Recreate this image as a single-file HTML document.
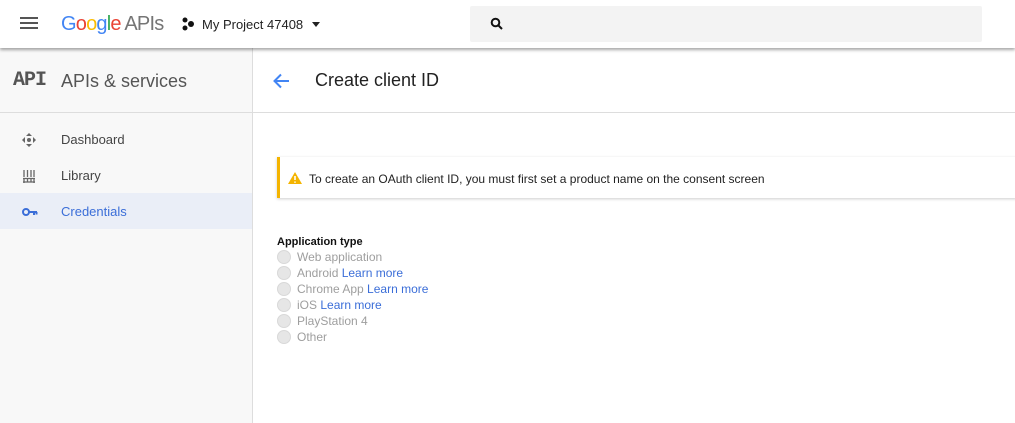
<!DOCTYPE html>
<html><head><style>
*{margin:0;padding:0;box-sizing:border-box}
body{width:1015px;height:423px;overflow:hidden;font-family:"Liberation Sans",Roboto,sans-serif;background:#fff;position:relative}
.hdr{position:absolute;left:0;top:0;width:1015px;height:48px;background:#fff;box-shadow:0 2px 3px rgba(0,0,0,.35);z-index:2}
.side{position:absolute;left:0;top:48px;width:253px;height:375px;background:#f8f8f8;border-right:1px solid #ddd}
.abs{position:absolute}
.item{position:absolute;left:0;width:252px;height:36px;font-size:13px;color:#444;line-height:38px}
.item span{position:absolute;left:61px}
.radio{position:absolute;left:277px;width:14px;height:14px;border-radius:50%;background:#e6e6e6;border:1px solid #d8d8d8}
.rl{position:absolute;left:297px;font-size:12px;color:#9e9e9e;line-height:16px}
.rl a{color:#3b6ed8;text-decoration:none}
</style></head><body>
<div class="hdr">
 <div class="abs" style="left:20px;top:17px;width:18px;height:2px;background:#555;box-shadow:0 5px 0 #555,0 10px 0 #555"></div>
 <div class="abs" style="left:61px;top:11px;font-size:20px;line-height:26px;letter-spacing:-0.8px"><span style="color:#4285f4">G</span><span style="color:#ea4335">o</span><span style="color:#fbbc05">o</span><span style="color:#4285f4">g</span><span style="color:#34a853">l</span><span style="color:#ea4335">e</span> <span style="color:#757575">APIs</span></div>
 <svg class="abs" style="left:181px;top:17px" width="14" height="14"><circle cx="4" cy="3" r="2.5" fill="#111"/><circle cx="10" cy="7" r="3" fill="#111"/><circle cx="4" cy="11" r="2.5" fill="#111"/></svg>
 <div class="abs" style="left:202px;top:17px;font-size:13px;color:#222">My Project 47408</div>
 <div class="abs" style="left:312px;top:22px;border-left:4px solid transparent;border-right:4px solid transparent;border-top:5px solid #222"></div>
 <div class="abs" style="left:470px;top:6px;width:512px;height:36px;background:#f3f3f3;border-radius:2px"></div>
 <svg class="abs" style="left:490px;top:17px" width="14" height="14"><circle cx="5.5" cy="5.5" r="3.8" fill="none" stroke="#111" stroke-width="2"/><path d="M8.5 8.5L12 12" stroke="#111" stroke-width="2"/></svg>
</div>
<div class="side">
 <div class="abs" style="left:13px;top:21px;font-family:'Liberation Mono',monospace;font-weight:bold;font-size:20px;color:#555;letter-spacing:-1px">API</div>
 <div class="abs" style="left:61px;top:23px;font-size:18px;color:#555">APIs &amp; services</div>
 <div class="abs" style="left:0;top:64px;width:252px;height:1px;background:#ddd"></div>
 <div class="item" style="top:73px"><svg class="abs" style="left:22px;top:12px" width="14" height="14"><path d="M7 0L10 3H4zM7 14L4 11H10zM0 7L3 4V10zM14 7L11 10V4z" fill="#666"/><circle cx="7" cy="7" r="2" fill="#666"/></svg><span>Dashboard</span></div>
 <div class="item" style="top:109px"><svg class="abs" style="left:23px;top:12px" width="12" height="14"><path d="M1 1v7M4.5 1v7M8 1v7M11 1v7M0 9.5h12M0 13h12M1 9v5M4.5 9.5v4M8 9.5v4M11 9v5" stroke="#666" stroke-width="1.3"/></svg><span>Library</span></div>
 <div class="item" style="top:145px;background:#eaeef7;color:#3b6ed8"><svg class="abs" style="left:22px;top:14px" width="16" height="10"><circle cx="4" cy="5" r="3" fill="none" stroke="#3b6ed8" stroke-width="2"/><path d="M7 5h8M12 5v3M14.5 5v2.5" stroke="#3b6ed8" stroke-width="2"/></svg><span>Credentials</span></div>
</div>
<svg class="abs" style="left:272px;top:73px" width="18" height="16"><path d="M17 8H3M9 1.5L2.5 8 9 14.5" fill="none" stroke="#4285f4" stroke-width="2"/></svg>
<div class="abs" style="left:315px;top:70px;font-size:18px;color:#222">Create client ID</div>
<div class="abs" style="left:253px;top:112px;width:762px;height:1px;background:#ddd"></div>
<div class="abs" style="left:277px;top:157px;width:740px;height:41px;background:#fff;border-left:3px solid #f4b400;box-shadow:0 1px 3px rgba(0,0,0,.2)"></div>
<svg class="abs" style="left:288px;top:172px" width="14" height="12"><path d="M7 0L14 12H0z" fill="#f4b400"/><path d="M7 4v4M7 9.5v1.3" stroke="#fff" stroke-width="1.6"/></svg>
<div class="abs" style="left:309px;top:172px;font-size:12px;color:#222">To create an OAuth client ID, you must first set a product name on the consent screen</div>
<div class="abs" style="left:277px;top:236px;font-size:11px;color:#111;font-weight:bold">Application type</div>
<div class="radio" style="top:250px"></div><div class="rl" style="top:249px">Web application</div>
<div class="radio" style="top:266px"></div><div class="rl" style="top:265px">Android <a>Learn more</a></div>
<div class="radio" style="top:282px"></div><div class="rl" style="top:281px">Chrome App <a>Learn more</a></div>
<div class="radio" style="top:298px"></div><div class="rl" style="top:297px">iOS <a>Learn more</a></div>
<div class="radio" style="top:314px"></div><div class="rl" style="top:313px">PlayStation 4</div>
<div class="radio" style="top:330px"></div><div class="rl" style="top:329px">Other</div>
</body></html>
